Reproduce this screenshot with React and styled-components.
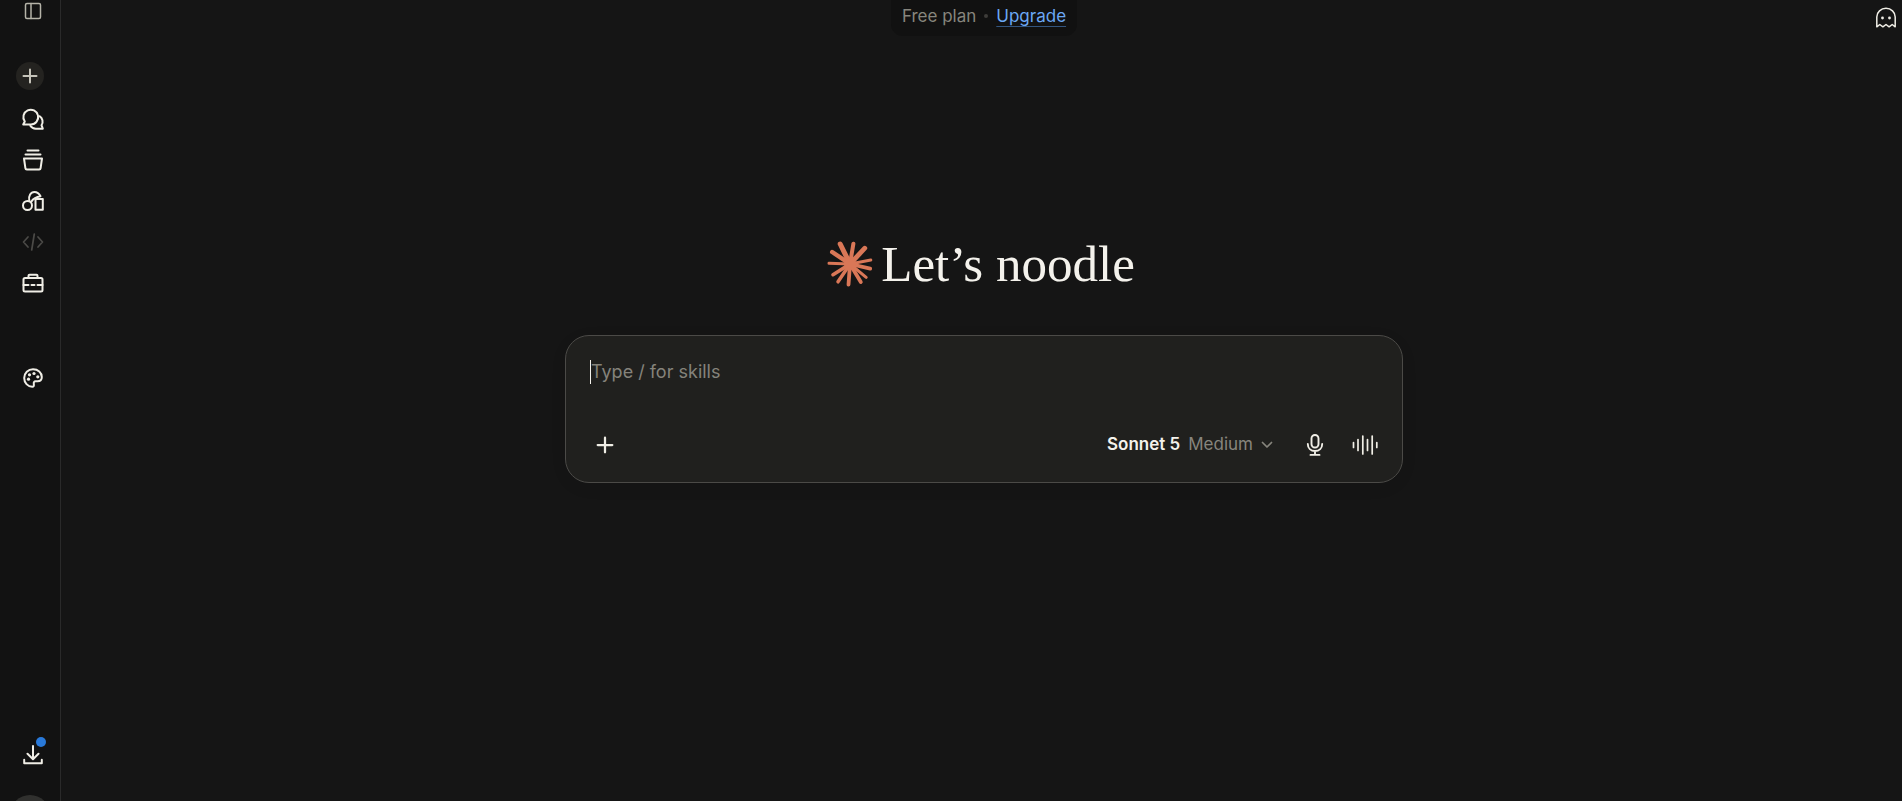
import styled, { createGlobalStyle } from "styled-components";
import { useState } from "react";

const GlobalStyle = createGlobalStyle`
* { box-sizing: border-box; }
body {
margin:0;
background:#151515;
color:#f4f2ec;
font-family:Inter, "Liberation Sans", sans-serif;
font-size:17px;
}
button, textarea { font:inherit; color:inherit; }
`;

const Page = styled.div`
display:flex;
height:100vh;
overflow:hidden;
`;

const Sidebar = styled.aside`
display:flex;
flex-direction:column;
flex-shrink:0;
width:61px;
padding-left:5px;
background:#121212;
border-right:1px solid #2a2a2a;
`;

const IconButton = styled.button`
position:relative;
display:flex;
align-items:center;
justify-content:center;
flex-shrink:0;
width:${(props) => props.$width || 36}px;
height:${(props) => props.$height || 36}px;
padding:0;
border:0;
border-radius:8px;
background:transparent;
color:${(props) => props.$color || "#f0eee6"};
cursor:pointer;
`;

const Icon = styled.svg`
display:block;
flex-shrink:0;
fill:none;
stroke:currentColor;
stroke-width:${(props) => props.$stroke || 2};
stroke-linecap:round;
stroke-linejoin:round;
overflow:visible;
`;

const NewChat = styled.button`
display:flex;
align-items:center;
justify-content:center;
width:28px;
height:28px;
margin:40px 0 8px 11px;
padding:0;
border:0;
border-radius:50%;
background:#242320;
color:#c6c4ba;
cursor:pointer;
`;

const Nav = styled.nav`
display:flex;
flex-direction:column;
align-items:center;
`;

const Extra = styled.div`
display:flex;
justify-content:center;
margin-top:54px;
`;

const SidebarFooter = styled.div`
display:flex;
flex-direction:column;
align-items:center;
margin-top:auto;
margin-bottom:-34px;
`;

const Dot = styled.span`
position:absolute;
top:0;
right:5px;
width:10px;
height:10px;
border-radius:50%;
background:#2979d9;
`;

const Avatar = styled.button`
width:40px;
height:40px;
margin:22px 5px 0 0;
padding:0;
border:0;
border-radius:50%;
background:#30302e;
`;

const Main = styled.main`
position:relative;
display:flex;
flex:1;
flex-direction:column;
align-items:center;
min-width:0;
padding-left:5px;
`;

const PlanBar = styled.div`
display:flex;
align-items:center;
gap:8px;
height:36px;
padding:0 11px 4px;
border-radius:0 0 12px 12px;
background:#111111;
color:#87857d;
`;

const Separator = styled.span`
width:4px;
height:4px;
border-radius:50%;
background:#3e3d3a;
`;

const Upgrade = styled.a`
color:#6ba8f5;
text-decoration:underline;
text-decoration-color:#33557f;
text-decoration-thickness:1px;
text-underline-offset:4px;
`;

const Incognito = styled.div`
position:absolute;
top:0;
right:-2px;
`;

const Greeting = styled.div`
display:flex;
align-items:center;
gap:8px;
margin-top:192px;
padding-right:6px;
`;

const Title = styled.h1`
margin:0;
font-family:"Liberation Serif", serif;
font-size:51px;
font-weight:400;
line-height:72px;
`;

const Composer = styled.form`
display:flex;
flex-direction:column;
justify-content:space-between;
width:100%;
max-width:838px;
min-height:148px;
margin-top:35px;
padding:22px 19px 19px 24px;
border:1px solid #4b4a47;
border-radius:24px;
background:#20201e;
box-shadow:0 4px 20px rgba(0,0,0,0.04);
`;

const Field = styled.div`
position:relative;
display:flex;
`;

const Prompt = styled.textarea`
flex:1;
height:28px;
padding:0 1px;
border:0;
outline:0;
resize:none;
background:transparent;
font-size:18px;
line-height:28px;
caret-color:transparent;
&::placeholder { color:#85837b; opacity:1; }
`;

const Caret = styled.span`
position:absolute;
top:2px;
left:0;
width:1px;
height:24px;
background:#f4f2ec;
`;

const Toolbar = styled.div`
display:flex;
align-items:center;
justify-content:space-between;
`;

const Group = styled.div`
display:flex;
align-items:center;
gap:14px;
`;

const ModelButton = styled.button`
display:flex;
align-items:center;
gap:8px;
height:36px;
padding:0 10px 2px;
border:0;
background:transparent;
color:#87857d;
cursor:pointer;
`;

const Model = styled.span`
color:#f4f2ec;
font-weight:600;
`;

const PanelIcon = () => (
    <Icon width="18" height="18" viewBox="0 0 18 18" $stroke="1.5" aria-hidden="true">
        <rect x="1.5" y="1.5" width="15" height="15" rx="1.5" />
        <path d="M7 1.5v15" />
    </Icon>
);

const PlusIcon = ({ size }) => (
    <Icon width={size} height={size} viewBox="0 0 16 16" aria-hidden="true">
        <path d="M8 1.5v13M1.5 8h13" />
    </Icon>
);

const ChatsIcon = () => (
    <Icon width="22" height="22" viewBox="0 0 22 22" aria-hidden="true">
        <path d="M1.2 16.5l1.6-3A7.400 7.400 0 1 1 9 16.500z" />
        <path d="M17.500 8.200a6.300 6.300 0 0 1 2 9l1.300 3.500h-6.500a6.800 6.800 0 0 1-6-2.900" />
    </Icon>
);

const ProjectsIcon = () => (
    <Icon width="22" height="22" viewBox="0 0 22 22" aria-hidden="true">
        <path d="M5.500 1.500h11M3.500 5.500h15" />
        <path d="M2 9.500h18l-1.400 9.600a1.500 1.500 0 0 1-1.500 1.400H4.900a1.500 1.500 0 0 1-1.500-1.400z" />
    </Icon>
);

const ArtifactsIcon = () => (
    <Icon width="22" height="22" viewBox="0 0 22 22" aria-hidden="true">
        <circle cx="5.500" cy="15.500" r="4.500" />
        <path d="M7.300 10.800C6.200 5.800 8.800 2 12.400 2c2.700 0 4.500 1 6.100 4.300-3.800.6-7 2.100-9.200 5.300" />
        <path d="M13.500 9h7.300v10.800h-7.300z" />
    </Icon>
);

const CodeIcon = () => (
    <Icon width="22" height="22" viewBox="0 0 22 22" $stroke="1.7" aria-hidden="true">
        <path d="M6 6l-4.500 5L6 16M16 6l4.500 5-4.500 5M12.300 3L9.700 19" />
    </Icon>
);

const CaseIcon = () => (
    <Icon width="22" height="22" viewBox="0 0 22 22" aria-hidden="true">
        <rect x="1.500" y="6" width="19" height="13.500" rx="1.500" />
        <path d="M6.500 6V3.700a1 1 0 0 1 1-1h7a1 1 0 0 1 1 1V6" />
        <path d="M1.500 13h5M9.500 13h3M15.500 13h5" />
    </Icon>
);

const PaletteIcon = () => (
    <Icon width="22" height="22" viewBox="0 0 22 22" aria-hidden="true">
        <path d="M11 2.200c5 0 8.800 3.300 8.800 7.800 0 3-1.800 4.300-4.200 4.300h-2c-1.500 0-2 1.100-1.800 2.500.3 1.800 0 3-1.600 3C5.700 19.500 2.200 16 2.200 11A8.800 8.800 0 0 1 11 2.200z" />
        <g fill="currentColor" stroke="none">
            <circle cx="6.500" cy="12.200" r="1.600" />
            <circle cx="7.500" cy="7.800" r="1.600" />
            <circle cx="12" cy="6.500" r="1.600" />
            <circle cx="15.800" cy="9.800" r="1.600" />
        </g>
    </Icon>
);

const DownloadIcon = () => (
    <Icon width="22" height="22" viewBox="0 0 22 22" aria-hidden="true">
        <path d="M11 2v13M5.500 9.800L11 15.300l5.500-5.500M2.200 15.800v3.400h17.600v-3.400" />
    </Icon>
);

const GhostIcon = () => (
    <Icon width="22" height="22" viewBox="0 0 22 22" $stroke="1.5" aria-hidden="true">
        <path d="M1.800 19.800V10a9.200 8.700 0 0 1 18.400 0v9.800l-3-2.300-3.100 2.300-3.100-2.300-3.100 2.300-3.100-2.300z" />
        <g fill="currentColor" stroke="none">
            <circle cx="7.500" cy="11" r="1.400" />
            <circle cx="14.500" cy="11" r="1.400" />
        </g>
    </Icon>
);

const MicIcon = () => (
    <Icon width="22" height="24" viewBox="0 0 22 24" $stroke="1.9" aria-hidden="true">
        <rect x="7.500" y="2" width="7" height="12.500" rx="3.500" />
        <path d="M3.800 11c0 4.200 3 7 7.200 7s7.200-2.800 7.200-7M11 18v3.500M6.500 21.900h9" />
    </Icon>
);

const VoiceIcon = () => (
    <Icon width="26" height="22" viewBox="0 0 26 22" $stroke="1.7" aria-hidden="true">
        <path d="M1.500 8.500v5M6 5.500v11M10.800 2v18M15.500 5.500v11M20.200 2v18M24.800 8.500v5" />
    </Icon>
);

const ChevronIcon = () => (
    <Icon width="12" height="12" viewBox="0 0 12 12" $stroke="1.7" aria-hidden="true">
        <path d="M1.500 4.500L6 9l4.500-4.500" />
    </Icon>
);

// tip x, tip y, ray thickness
const rays = [
    [-9.8, -20, 5],
    [3.4, -20.3, 4],
    [14.8, -15.8, 4.8],
    [20.8, -4, 3],
    [20.2, 4.6, 3.8],
    [16.2, 13.3, 3],
    [10.8, 18, 3.8],
    [-1.5, 20.6, 3.8],
    [-12, 17.8, 3.5],
    [-17, 10.7, 3.6],
    [-21, -0.7, 3],
    [-17.8, -12, 4.4],
];

const Burst = () => (
    <Icon width="46" height="46" viewBox="-23 -23 46 46" color="#d97757" aria-hidden="true">
        {rays.map(([x, y, w]) => (
            <path key={x} d={`M0 0L${x} ${y}`} style={{ strokeWidth: w }} />
        ))}
        <circle r="6" fill="currentColor" stroke="none" />
    </Icon>
);

const links = [
    { label: "Chats", icon: <ChatsIcon /> },
    { label: "Projects", icon: <ProjectsIcon /> },
    { label: "Artifacts", icon: <ArtifactsIcon /> },
    { label: "Code", icon: <CodeIcon />, color: "#4b4a47" },
    { label: "Customize", icon: <CaseIcon /> },
];

const App = () => {
    const [text, setText] = useState("");

    return (
        <>
            <GlobalStyle />
            <Page>
                <Sidebar>
                    <Nav>
                        <IconButton $height={22} $color="#b5b3a8" aria-label="Toggle sidebar">
                            <PanelIcon />
                        </IconButton>
                    </Nav>
                    <NewChat aria-label="New chat"><PlusIcon size="16" /></NewChat>
                    <Nav>
                        {links.map((item) => (
                            <IconButton key={item.label} $height={41} $color={item.color} aria-label={item.label}>
                                {item.icon}
                            </IconButton>
                        ))}
                    </Nav>
                    <Extra>
                        <IconButton $height={41} aria-label="Design"><PaletteIcon /></IconButton>
                    </Extra>
                    <SidebarFooter>
                        <IconButton aria-label="Download the app">
                            <DownloadIcon />
                            <Dot />
                        </IconButton>
                        <Avatar aria-label="Account" />
                    </SidebarFooter>
                </Sidebar>
                <Main>
                    <PlanBar>
                        <span>Free plan</span>
                        <Separator />
                        <Upgrade href="#upgrade">Upgrade</Upgrade>
                    </PlanBar>
                    <Incognito>
                        <IconButton aria-label="Incognito chat"><GhostIcon /></IconButton>
                    </Incognito>
                    <Greeting>
                        <Burst />
                        <Title>Let’s noodle</Title>
                    </Greeting>
                    <Composer onSubmit={(event) => event.preventDefault()}>
                        <Field>
                            <Prompt
                                aria-label="Prompt"
                                placeholder="Type / for skills"
                                value={text}
                                onChange={(event) => setText(event.target.value)}
                            />
                            {!text && <Caret />}
                        </Field>
                        <Toolbar>
                            <IconButton type="button" $width={30} aria-label="Add files">
                                <PlusIcon size="18" />
                            </IconButton>
                            <Group>
                                <ModelButton type="button">
                                    <Model>Sonnet 5</Model>
                                    <span>Medium</span>
                                    <ChevronIcon />
                                </ModelButton>
                                <IconButton type="button" aria-label="Dictate"><MicIcon /></IconButton>
                                <IconButton type="button" aria-label="Voice mode"><VoiceIcon /></IconButton>
                            </Group>
                        </Toolbar>
                    </Composer>
                </Main>
            </Page>
        </>
    );
};

export default App;
